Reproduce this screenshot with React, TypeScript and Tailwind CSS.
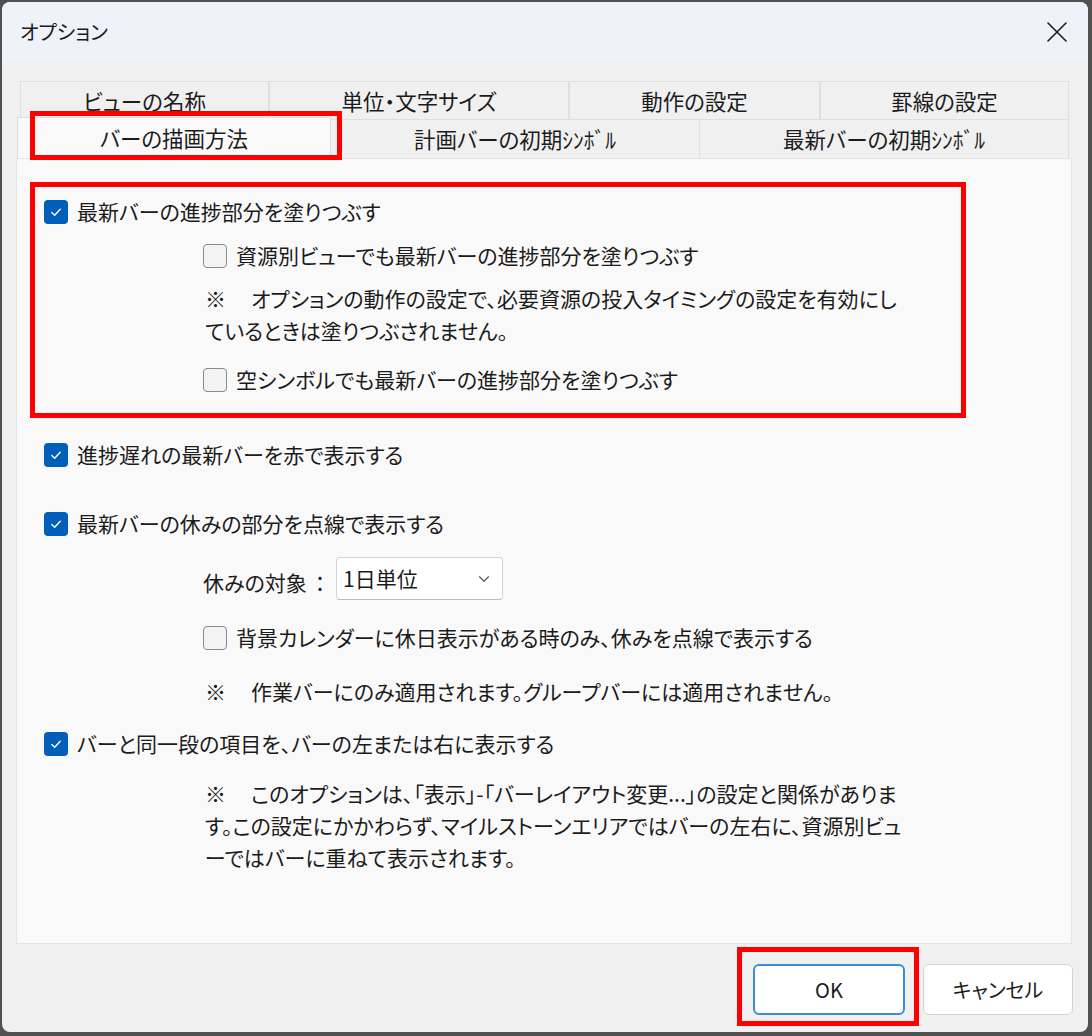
import { ChevronDown } from "lucide-react";

const font = "[font-family:'Noto_Sans_CJK_JP','Noto_Sans',sans-serif] [font-feature-settings:'palt']";

function Box({ on }: { on: boolean }) {
  if (on) {
    return (
      <span className="flex h-[24px] w-[24px] shrink-0 items-center justify-center rounded-[4px] bg-[#005fb8]">
        <svg width="14" height="14" viewBox="0 0 14 14" fill="none">
          <path
            d="M2.8 7.4 L5.7 10.2 L11.2 4.2"
            stroke="white"
            strokeWidth="1.4"
            strokeLinecap="round"
            strokeLinejoin="round"
          />
        </svg>
      </span>
    );
  }
  return <span className="h-[24px] w-[24px] shrink-0 rounded-[4px] border border-[#8a8a8a] bg-[#f3f3f3]" />;
}

function Option({ on, label, className }: { on: boolean; label: string; className: string }) {
  return (
    <div className={`flex h-[32px] items-center gap-[9px] whitespace-nowrap ${className}`}>
      <Box on={on} />
      <span>{label}</span>
    </div>
  );
}

function Note({ lines, className }: { lines: string[]; className: string }) {
  return (
    <div className={`whitespace-nowrap leading-[32px] ${className}`}>
      {lines.map((line, i) => (
        <div key={i}>
          {i === 0 && <span className="mr-[25px]">※</span>}
          {line}
        </div>
      ))}
    </div>
  );
}

export default function App() {
  return (
    <div className={`h-[1036px] w-[1092px] bg-[#505050] pl-[2px] pt-[2px] text-[21px] text-[#1b1b1b] ${font}`}>
      <div className="relative flex h-[1030px] w-[1086px] flex-col overflow-hidden rounded-[8px] bg-[#f0f0f0]">
        {/* title bar */}
        <div className="flex h-[60px] shrink-0 items-center justify-between bg-[#eef3f9] pl-[18px] pr-[21px] text-[20px]">
          <span>オプション</span>
          <svg width="20" height="20" viewBox="0 0 20 20" fill="none">
            <path d="M1 1 L19 19 M19 1 L1 19" stroke="#1b1b1b" strokeWidth="1.6" strokeLinecap="round" />
          </svg>
        </div>

        {/* tabs */}
        <div className="ml-[18px] mt-[19px] flex h-[38px] text-[21.5px]">
          {[
            ["ビューの名称", "w-[249px]"],
            ["単位・文字サイズ", "w-[300px]"],
            ["動作の設定", "w-[251px]"],
            ["罫線の設定", "w-[249px]"],
          ].map(([t, w]) => (
            <div
              key={t}
              className={`flex items-center justify-center border border-b-0 border-[#dfdfdf] bg-[#f0f0f0] pt-[1px] ${w}`}
            >
              {t}
            </div>
          ))}
        </div>
        <div className="ml-[15px] flex h-[39px] items-end text-[21.5px]">
          <div className="relative z-10 -mt-[2px] flex h-[41px] w-[314px] items-center justify-center border border-b-0 border-[#dfdfdf] bg-[#f9f9f9]">
            バーの描画方法
          </div>
          <div className="flex h-[39px] w-[369px] items-center justify-center border border-b-0 border-l-0 border-[#dfdfdf] bg-[#f0f0f0]">
            計画バーの初期ｼﾝﾎﾞﾙ
          </div>
          <div className="flex h-[39px] w-[369px] items-center justify-center border border-b-0 border-l-0 border-[#dfdfdf] bg-[#f0f0f0]">
            最新バーの初期ｼﾝﾎﾞﾙ
          </div>
        </div>

        {/* annotation around the active tab */}
        <div className="pointer-events-none absolute left-[28px] top-[109px] z-20 h-[49px] w-[312px] border-[5px] border-[#ff0000]" />

        {/* panel */}
        <div className="ml-[14px] h-[786px] w-[1056px] shrink-0 border border-[#e3e3e3] bg-[#f9f9f9]">
          <div className="ml-[13px] mt-[23px] h-[236px] w-[936px] border-[5px] border-[#ff0000]">
            <Option on label="最新バーの進捗部分を塗りつぶす" className="ml-[9px] mt-[9px]" />
            <Option on={false} label="資源別ビューでも最新バーの進捗部分を塗りつぶす" className="ml-[168px] mt-[12px]" />
            <Note
              className="ml-[170px] mt-[10px]"
              lines={["オプションの動作の設定で、必要資源の投入タイミングの設定を有効にし", "ているときは塗りつぶされません。"]}
            />
            <Option on={false} label="空シンボルでも最新バーの進捗部分を塗りつぶす" className="ml-[168px] mt-[18px]" />
          </div>

          <Option on label="進捗遅れの最新バーを赤で表示する" className="ml-[27px] mt-[21px]" />
          <Option on label="最新バーの休みの部分を点線で表示する" className="ml-[27px] mt-[37px]" />

          <div className="ml-[186px] mt-[17px] flex h-[43px] items-center whitespace-nowrap">
            <span className="w-[133px] pt-[8px]">
              休みの対象<span className="ml-[8px]">：</span>
            </span>
            <div className="flex h-[43px] w-[167px] items-center justify-between rounded-[4px] border border-[#d4d4d4] border-b-[#bdbdbd] bg-white pl-[6px] pr-[9px]">
              <span>1日単位</span>
              <ChevronDown size={18} strokeWidth={1.5} color="#555" />
            </div>
          </div>

          <Option
            on={false}
            label="背景カレンダーに休日表示がある時のみ、休みを点線で表示する"
            className="ml-[186px] mt-[22px]"
          />
          <Note
            className="ml-[188px] mt-[21px]"
            lines={["作業バーにのみ適用されます。グループバーには適用されません。"]}
          />
          <Option on label="バーと同一段の項目を、バーの左または右に表示する" className="ml-[27px] mt-[21px]" />
          <Note
            className="ml-[188px] mt-[17px]"
            lines={[
              "このオプションは、「表示」-「バーレイアウト変更...」の設定と関係がありま",
              "す。この設定にかかわらず、マイルストーンエリアではバーの左右に、資源別ビュ",
              "ーではバーに重ねて表示されます。",
            ]}
          />
        </div>

        {/* buttons */}
        <div className="flex items-start justify-end gap-[4px] pr-[15px] pt-[3px] text-[20px]">
          <div className="border-[5px] border-[#ff0000] pb-[6px] pl-[11px] pr-[9px] pt-[12px]">
            <button
              type="button"
              className="flex h-[51px] w-[152px] items-center justify-center rounded-[6px] border-2 border-[#3a8ddb] bg-white"
            >
              OK
            </button>
          </div>
          <button
            type="button"
            className="mt-[17px] flex h-[51px] w-[150px] items-center justify-center rounded-[6px] border border-[#d3d3d3] bg-white"
          >
            キャンセル
          </button>
        </div>
      </div>
    </div>
  );
}
